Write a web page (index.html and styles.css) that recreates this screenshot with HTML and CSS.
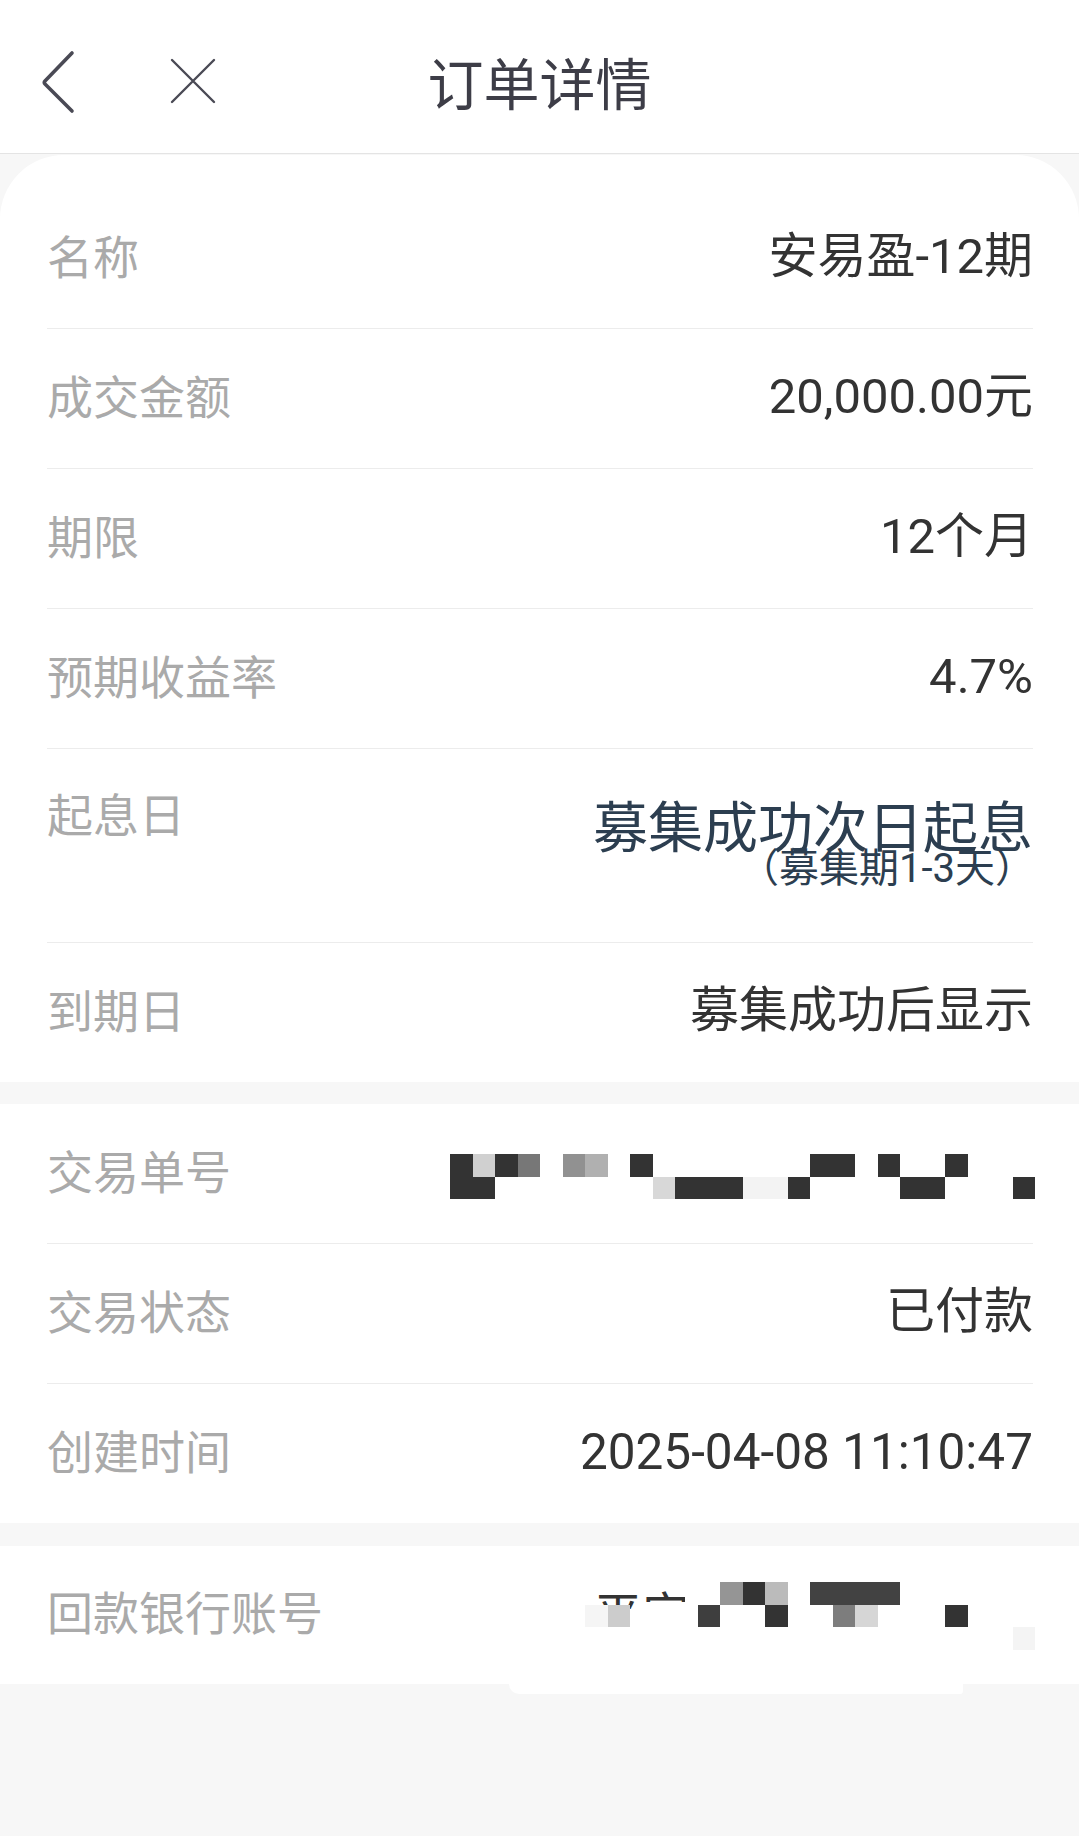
FILE: index.html
```html
<!DOCTYPE html>
<html lang="zh-CN">
<head>
<meta charset="utf-8">
<title>订单详情</title>
<link rel="stylesheet" href="styles.css">
</head>
<body>
<div class="page">
  <header class="topbar">
    <div class="nav-left">
      <svg class="ic-back" width="40" height="64" viewBox="0 0 40 64"><path d="M31 3 L4 31 Q2.5 32.5 4 34 L31 61" fill="none" stroke="#4a4a55" stroke-width="3.6" stroke-linecap="round" stroke-linejoin="round"/></svg>
      <svg class="ic-close" width="48" height="48" viewBox="0 0 48 48"><path d="M3 3 L45 45 M45 3 L3 45" fill="none" stroke="#4a4a55" stroke-width="2.4" stroke-linecap="round"/></svg>
    </div>
    <h1 class="title">订单详情</h1>
    <div class="nav-right"></div>
  </header>

  <section class="card card-top">
    <div class="row"><span class="label">名称</span><span class="value">安易盈-12期</span></div>
    <div class="row"><span class="label">成交金额</span><span class="value">20,000.00元</span></div>
    <div class="row"><span class="label">期限</span><span class="value">12个月</span></div>
    <div class="row"><span class="label">预期收益率</span><span class="value">4.7%</span></div>
    <div class="row row-tall">
      <span class="label">起息日</span>
      <div class="value-stack">
        <div class="value-main">募集成功次日起息</div>
        <div class="value-sub">（募集期1-3天）</div>
      </div>
    </div>
    <div class="row row-last"><span class="label">到期日</span><span class="value">募集成功后显示</span></div>
  </section>

  <section class="card card-mid">
    <div class="row">
      <span class="label">交易单号</span>
      <svg class="mosaic m1" width="585" height="45" viewBox="0 0 26 2" shape-rendering="crispEdges">
        <rect x="0" y="0" width="1" height="1" fill="#333"/>
        <rect x="1" y="0" width="1" height="1" fill="#d0d0d0"/>
        <rect x="2" y="0" width="1" height="1" fill="#333"/>
        <rect x="3" y="0" width="1" height="1" fill="#777"/>
        <rect x="5" y="0" width="1" height="1" fill="#919191"/>
        <rect x="6" y="0" width="1" height="1" fill="#b0b0b0"/>
        <rect x="8" y="0" width="1" height="1" fill="#333"/>
        <rect x="16" y="0" width="2" height="1" fill="#333"/>
        <rect x="19" y="0" width="1" height="1" fill="#333"/>
        <rect x="22" y="0" width="1" height="1" fill="#333"/>
        <rect x="0" y="1" width="2" height="1" fill="#333"/>
        <rect x="9" y="1" width="1" height="1" fill="#d8d8d8"/>
        <rect x="10" y="1" width="3" height="1" fill="#333"/>
        <rect x="13" y="1" width="2" height="1" fill="#f3f3f3"/>
        <rect x="15" y="1" width="1" height="1" fill="#333"/>
        <rect x="20" y="1" width="2" height="1" fill="#333"/>
        <rect x="25" y="1" width="1" height="1" fill="#333"/>
      </svg>
    </div>
    <div class="row"><span class="label">交易状态</span><span class="value">已付款</span></div>
    <div class="row row-last"><span class="label">创建时间</span><span class="value value-time">2025-04-08 11:10:47</span></div>
  </section>

  <section class="card card-bank">
    <div class="row row-last row-bank">
      <span class="label">回款银行账号</span>
      <svg class="mosaic m2" width="450" height="68" viewBox="0 0 450 68">
        <defs>
          <clipPath id="cp1"><rect x="0" y="0" width="55" height="27"/></clipPath>
          <clipPath id="cp2"><rect x="55" y="0" width="45" height="20"/></clipPath>
        </defs>
        <text class="peek" x="9" y="50" clip-path="url(#cp1)">平</text>
        <text class="peek" x="57" y="50" clip-path="url(#cp2)">安</text>
        <g shape-rendering="crispEdges">
          <rect x="135" y="0" width="22.5" height="23" fill="#959595"/>
          <rect x="157.5" y="0" width="22.5" height="23" fill="#333"/>
          <rect x="180" y="0" width="22.5" height="23" fill="#bbb"/>
          <rect x="225" y="0" width="90" height="23" fill="#424242"/>
          <rect x="0" y="23" width="22.5" height="22" fill="#f5f5f5"/>
          <rect x="22.5" y="23" width="22.5" height="22" fill="#ccc"/>
          <rect x="112.5" y="23" width="22.5" height="22" fill="#3e3e3e"/>
          <rect x="180" y="23" width="22.5" height="22" fill="#333"/>
          <rect x="247.5" y="23" width="22.5" height="22" fill="#7d7d7d"/>
          <rect x="270" y="23" width="22.5" height="22" fill="#d6d6d6"/>
          <rect x="360" y="23" width="22.5" height="22" fill="#333"/>
          <rect x="427.5" y="45" width="22.5" height="23" fill="#f4f4f4"/>
        </g>
      </svg>
    </div>
  </section>
</div>
</body>
</html>
```

FILE: styles.css
```css
html, body {
  margin: 0;
  padding: 0;
}

body {
  width: 1079px;
  min-height: 1836px;
  background: #f7f7f7;
  font-family: Roboto, "Noto Sans CJK SC", "Noto Sans", sans-serif;
  -webkit-font-smoothing: antialiased;
}

.page {
  display: flex;
  flex-direction: column;
}

.topbar {
  height: 143px;
  padding-top: 10px;
  background: #fff;
  border-bottom: 1px solid #e4e4e4;
  display: grid;
  grid-template-columns: 1fr auto 1fr;
  align-items: center;
}

.nav-left {
  display: flex;
  align-items: center;
  padding-left: 41px;
  gap: 88px;
}

.ic-back {
  display: block;
  margin-top: 1px;
}

.ic-close {
  display: block;
  margin-top: -1px;
}

.title {
  margin: 0;
  font-family: "Noto Sans CJK SC", sans-serif;
  font-weight: 400;
  font-size: 56px;
  line-height: 1.2;
  color: #3d3d47;
  padding-bottom: 1px;
}

.card {
  background: #fff;
  padding: 0 46px 0 47px;
  position: relative;
}

.card-top {
  margin-top: 1px;
  border-radius: 64px 64px 0 0;
  padding-top: 34px;
}

.card-mid {
  margin-top: 22px;
}

.card-bank {
  margin-top: 23px;
}

.card-bank::after {
  content: "";
  position: absolute;
  left: 509px;
  width: 454px;
  bottom: -10px;
  height: 10px;
  background: #fff;
  border-radius: 0 0 20px 60px;
}

.row {
  height: 139px;
  border-bottom: 1px solid #ececec;
  display: flex;
  align-items: center;
  justify-content: space-between;
}

.row-last {
  border-bottom: none;
}

.row-bank {
  height: 138px;
}

.label {
  font-family: "Noto Sans CJK SC", sans-serif;
  font-size: 46px;
  line-height: 1.2;
  color: #aaaaaa;
  white-space: nowrap;
  margin-bottom: 8px;
}

.value {
  font-size: 49px;
  line-height: 1.2;
  color: #333;
  white-space: nowrap;
  margin-bottom: 2px;
}

.value-time {
  font-size: 49.5px;
}

.row-tall {
  height: 153px;
  padding-top: 40px;
  align-items: flex-start;
}

.row-tall .label {
  margin-bottom: 0;
  margin-top: -4px;
}

.value-stack {
  display: flex;
  flex-direction: column;
  align-items: flex-end;
  color: #2c3e50;
  margin-top: 6px;
}

.value-main {
  font-size: 55px;
  line-height: 1.2;
  white-space: nowrap;
}

.value-sub {
  font-size: 40px;
  line-height: 1.2;
  margin-top: -16px;
  margin-right: -2px;
  white-space: nowrap;
}

.mosaic {
  display: block;
  flex: none;
  margin-right: -2px;
}

.m1 {
  margin-top: 5px;
}

.m2 {
  margin-top: 2px;
}

.peek {
  font-family: "Noto Sans CJK SC", sans-serif;
  font-size: 48px;
  fill: #333;
}
```
